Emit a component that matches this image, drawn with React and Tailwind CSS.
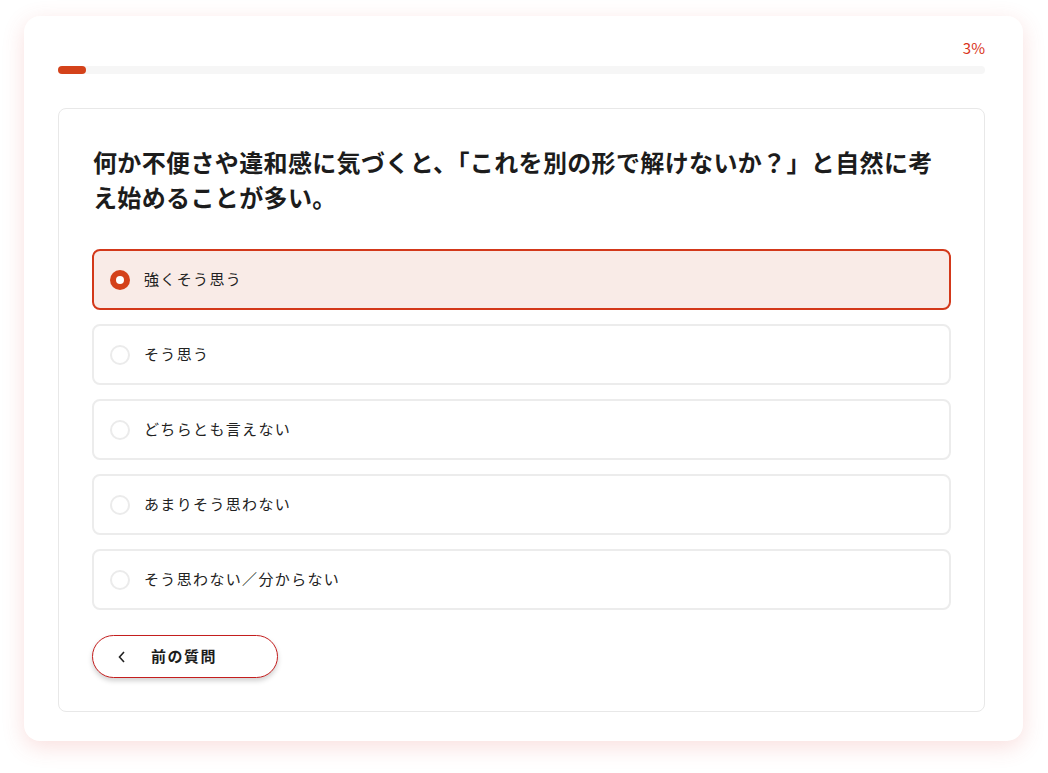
import React, { useState } from "react";

const options = [
  "強くそう思う",
  "そう思う",
  "どちらとも言えない",
  "あまりそう思わない",
  "そう思わない／分からない",
];

function App() {
  const [selected, setSelected] = useState(0);
  const progress = 3;

  return (
    <div
      className="min-h-[773px] bg-white pl-6 pr-[25px] pt-4 pb-8"
      style={{ fontFamily: '"Noto Sans CJK JP", "Noto Sans", sans-serif' }}
    >
      <div className="rounded-2xl bg-white pl-[34px] pr-[38px] pt-[22px] pb-[29px] shadow-[0_6px_22px_rgba(220,80,70,0.18)]">
        <div className="flex justify-end text-[15px] leading-5 text-[#d9331a]">{progress}%</div>
        <div className="mt-2 h-2 w-full rounded-full bg-[#f6f6f6]">
          <div className="h-2 rounded-full bg-[#d4421a]" style={{ width: `${progress}%` }} />
        </div>

        <div className="mt-[34px] rounded-lg border border-[#e8e8e8] px-[33px] pt-[35px] pb-[33px]">
          <h2 className="pl-px text-[24px] font-bold leading-[35px] tracking-[0.015em] text-[#1c1c1c]">
            何か不便さや違和感に気づくと、「これを別の形で解けないか？」と自然に考え始めることが多い。
          </h2>

          <div className="mt-[35px] flex flex-col gap-[14px]">
            {options.map((label, i) => {
              const active = i === selected;
              return (
                <button
                  key={label}
                  onClick={() => setSelected(i)}
                  className={
                    active
                      ? "flex h-[61px] items-center gap-[14px] rounded-lg border-2 border-[#d3381a] bg-[#f9ebe7] px-4 text-left"
                      : "flex h-[61px] items-center gap-[14px] rounded-lg border-2 border-[#ececec] bg-white px-4 text-left"
                  }
                >
                  {active ? (
                    <span className="flex h-5 w-5 items-center justify-center rounded-full bg-[#d4421a]">
                      <span className="h-2 w-2 rounded-full bg-white" />
                    </span>
                  ) : (
                    <span className="h-5 w-5 rounded-full border-2 border-[#ebebeb] bg-white" />
                  )}
                  <span className="text-[15px] tracking-[0.09em] text-[#222]">{label}</span>
                </button>
              );
            })}
          </div>

          <button className="mt-[25px] flex h-[43px] w-[186px] items-center rounded-full border border-[#c41e1e] bg-white pl-[24px] shadow-[0_3px_5px_rgba(0,0,0,0.18)]">
            <svg width="10" height="14" viewBox="0 0 10 14" fill="none" stroke="#222" strokeWidth="1.6">
              <path d="M7 2 L2.5 7 L7 12" />
            </svg>
            <span className="ml-[24px] text-[15px] font-bold tracking-[0.1em] text-[#1c1c1c]">前の質問</span>
          </button>
        </div>
      </div>
    </div>
  );
}

export default App;
